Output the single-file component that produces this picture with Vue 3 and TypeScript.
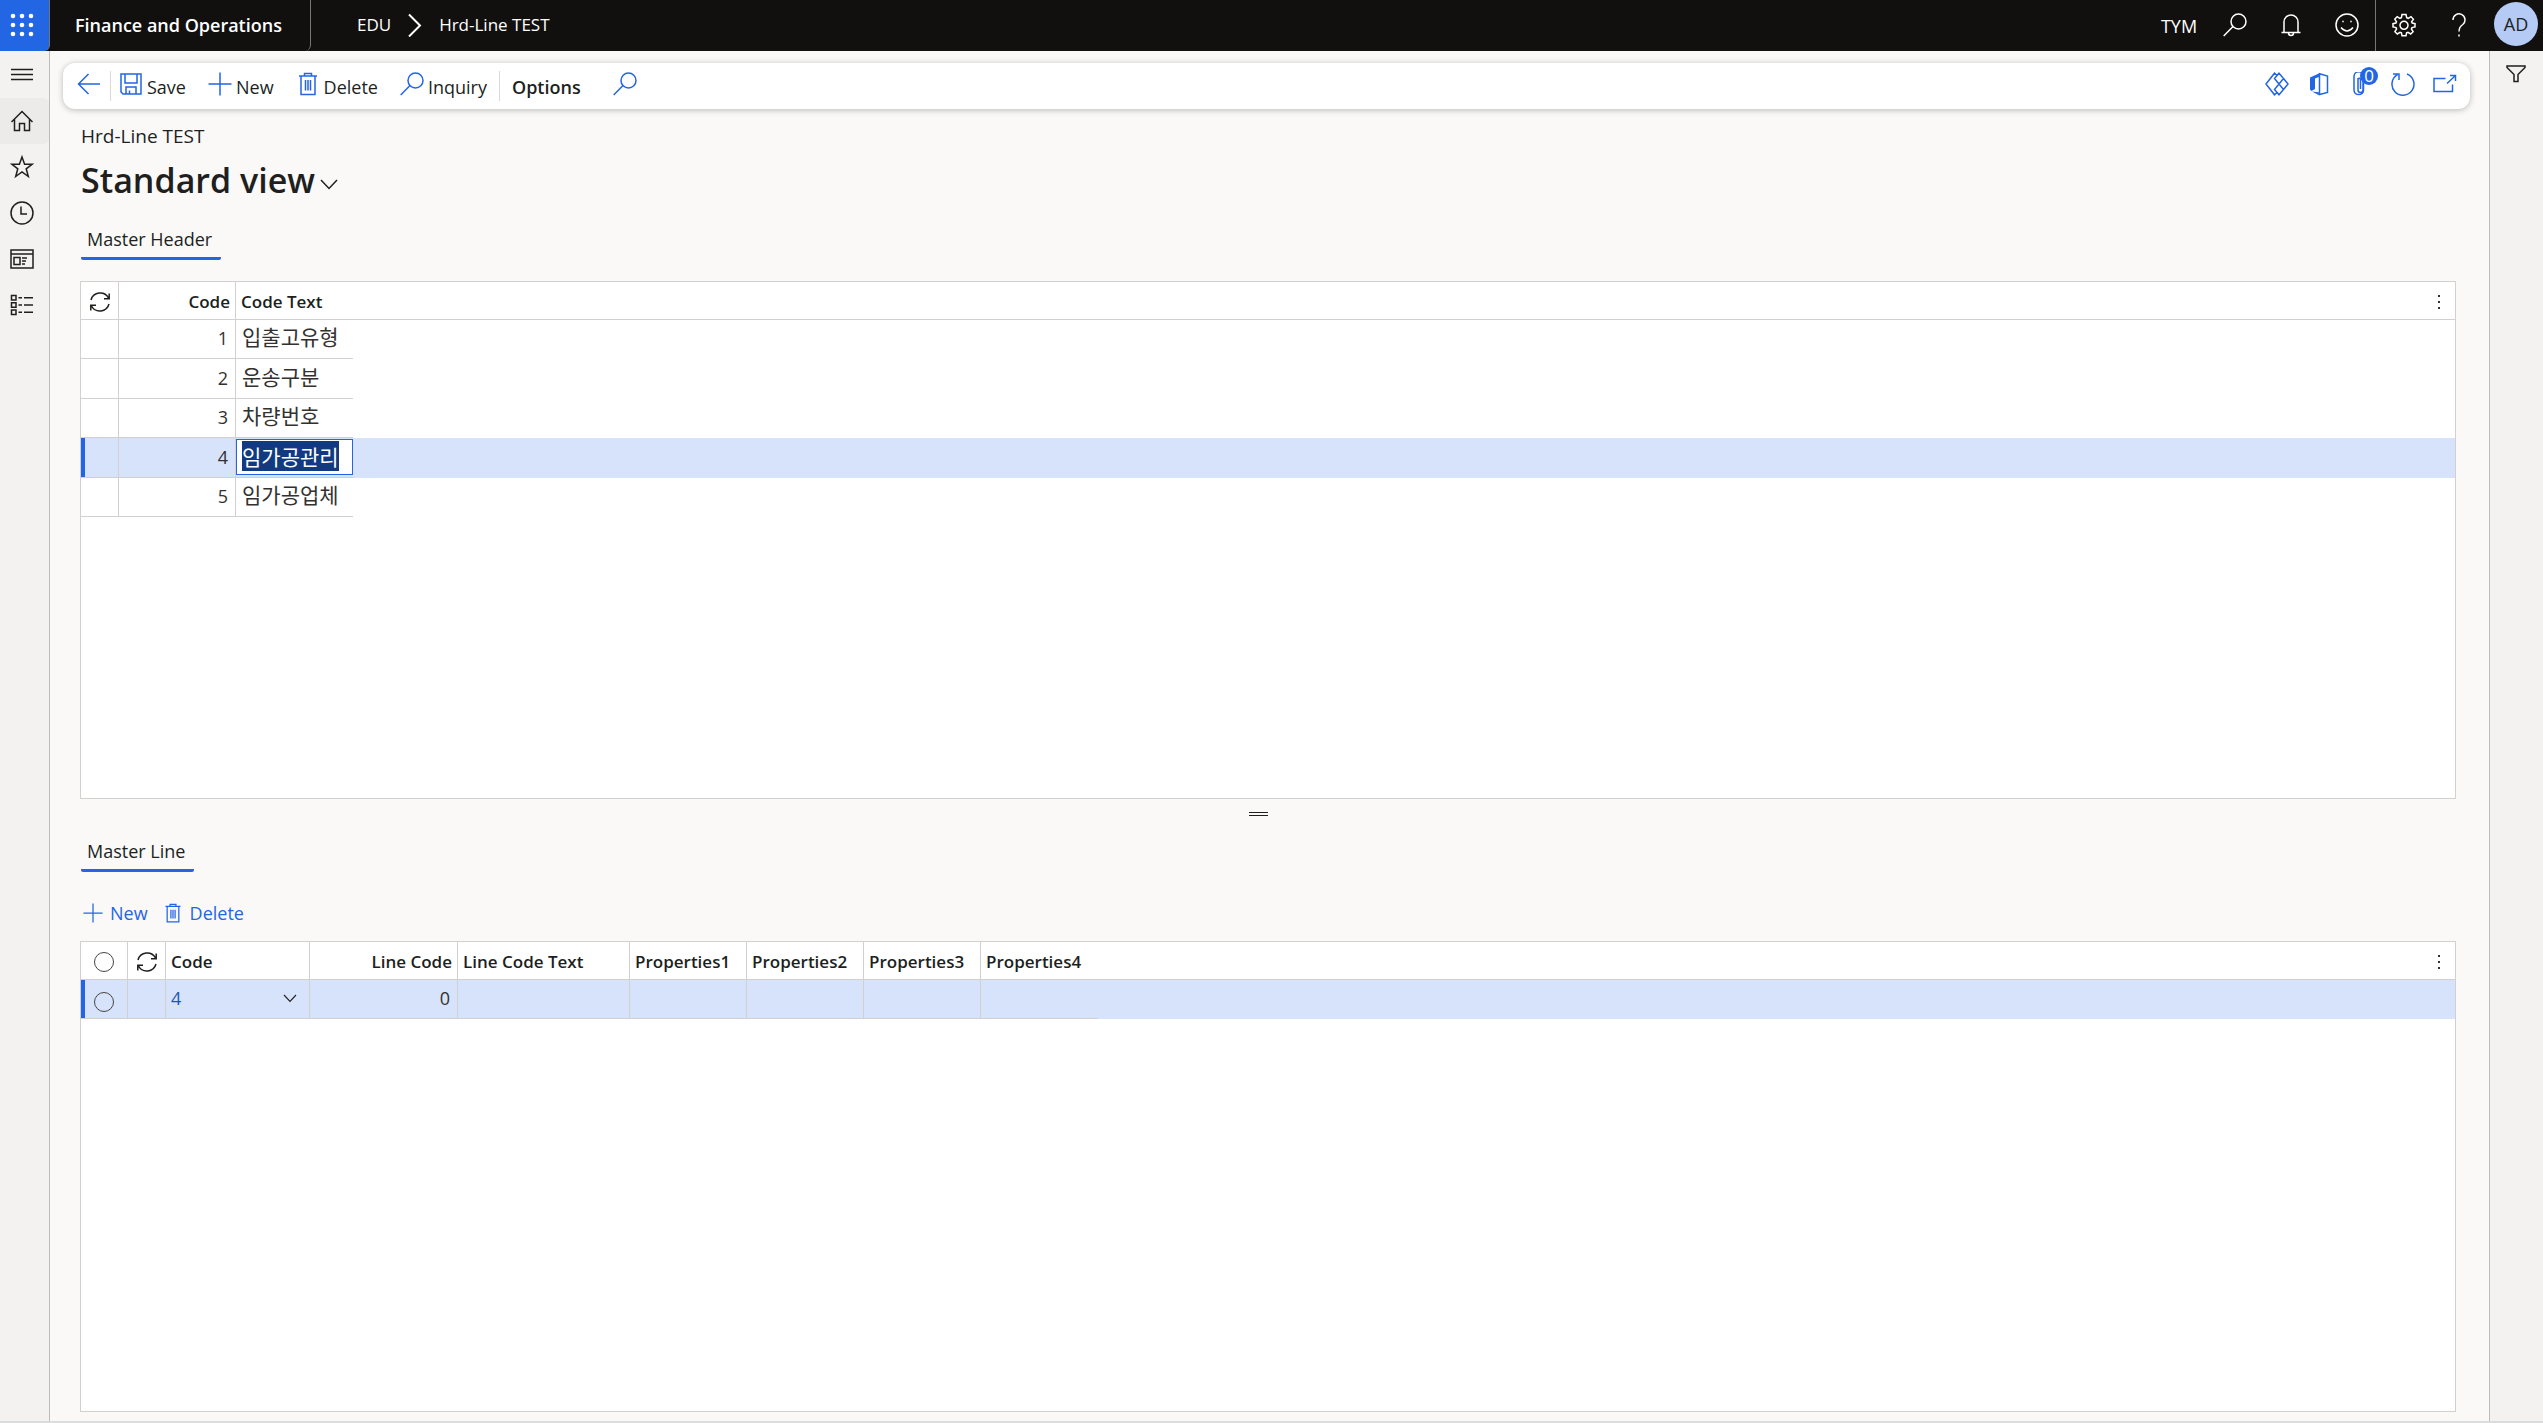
<script setup lang="ts">
import { h, nextTick, onMounted, ref } from 'vue'

interface HeaderRow {
  code: number
  text: string
}

const glyphs: Record<string, string> = {
  menu: 'M1 7.5H23M1 12.5H23M1 17.5H23',
  home: 'M1.5 13L12 2.5L22.500 13M4.500 10.500V21.500H9.500V14.500H14.500V21.500H19.500V10.500',
  star: 'M12 2L14.600 9.300H22L16.200 13.800L18.300 21.500L12 17L5.700 21.500L7.800 13.800L2 9.300H9.400Z',
  clock: 'M12 1A11 11 0 1 1 12 23A11 11 0 1 1 12 1M11 5.500V13H17',
  workspace: 'M1 3H23V21H1ZM1 7H23M4 10.500H10V17.500H4ZM12 11H17M12 14H16M12 17H15',
  list: 'M1.500 2.500H6V7H1.500ZM1.500 9.700H6V14.200H1.500ZM1.500 17H6V21.500H1.500ZM8.500 4.700H12M14 4.700H23M8.500 12H12M14 12H23M8.500 19.200H12M14 19.200H23',
  crumb: 'M6 1.500L17 12.500L6 23.500',
  search: 'M15.500 1A7.500 7.500 0 1 1 15.500 16A7.500 7.500 0 1 1 15.500 1M10 13.500L0.700 23',
  bell: 'M2.500 19.500H21.500M5 19.500V9A7 7 0 0 1 19 9V19.500M9.500 20A2.500 2.500 0 0 0 14.500 20',
  smile: 'M12 1A11 11 0 1 1 12 23A11 11 0 1 1 12 1M6 14.500Q12 21.500 18 14.500M7.300 8.500H8.700M15.300 8.500H16.700M8 7.800V9.200M16 7.800V9.200',
  gear: 'M10 1.500H14L14.700 4.700L16.200 5.300L19 3.600L21.400 6.200L19.600 8.800L20.200 10.100L23 10.700V13.900L20 14.600L19.400 16L21.100 18.700L18.700 21L16 19.300L14.600 19.900L14 22.700H10L9.400 19.900L8 19.300L5.300 21L2.900 18.700L4.600 16L4 14.600L1 13.900V10.700L3.900 10.100L4.500 8.800L2.800 6.200L5.200 3.600L7.900 5.300L9.400 4.700ZM12 8.300A4 4 0 1 1 12 16.300A4 4 0 1 1 12 8.300',
  help: 'M6 7A6 6 0 1 1 15.800 11.500Q12 14.200 12 18.500M12 21.500V23.500',
  back: 'M23 12H1.500M11.500 2L1.500 12L11.500 22',
  save: 'M2 2H22V22H4L2 20ZM6 2V11H18V2M7 22V15H17V22M10.500 22V18.500',
  plus: 'M12 0.500V23.500M0.500 12H23.500',
  trash: 'M3 4H21M8.500 4V1.500H15.500V4M5 4V22.500H19V4M9.500 8V18.500M12 8V18.500M14.500 8V18.500',
  diamonds: 'M12 3.500L9.500 1.200L1 12L9.500 22.800L12 20.500M14 1.200L18.500 6.500L14 12L9.500 6.500ZM14 12L18.500 17.500L14 22.800L9.500 17.500ZM18.500 6.500L23 12L18.500 17.500',
  clip: 'M14 6V18A2.500 2.500 0 0 1 9 18V6M5 17V4.500A4.500 4.500 0 0 1 14.500 4.500V18.500A4.800 4.800 0 0 1 5 18.500V15M9 7A1.500 1.500 0 0 1 11.500 7V17',
  refresh: 'M16 2A11 11 0 1 1 6.500 2.700M2 2H8V8',
  popout: 'M12.500 6.500H1V19.500H19.500V12.500M14 11.500L22.500 3.500M17 3.500H22.500V9',
  filter: 'M3 4H21V5.500L14 12.500V19.500H10V12.500L3 5.500Z',
  sync: 'M3 10A9.500 9.500 0 0 1 20.500 8M21.200 3.500V8.800H16M21 14A9.500 9.500 0 0 1 3.500 16M2.800 20.500V15.200H8',
  chevron: 'M4 8L12 16.500L20 8',
}

function Icon(props: { name: string }) {
  return h(
    'svg',
    {
      viewBox: '0 0 24 24',
      width: 24,
      height: 24,
      fill: 'none',
      stroke: 'currentColor',
      'stroke-width': 1.5,
      'aria-hidden': 'true',
    },
    [h('path', { d: glyphs[props.name] })],
  )
}
Icon.props = ['name']

const navItems = [
  { icon: 'home', label: 'Home' },
  { icon: 'star', label: 'Favorites' },
  { icon: 'clock', label: 'Recent' },
  { icon: 'workspace', label: 'Workspaces' },
  { icon: 'list', label: 'Modules' },
]

const headerRows = ref<HeaderRow[]>([
  { code: 1, text: '입출고유형' },
  { code: 2, text: '운송구분' },
  { code: 3, text: '차량번호' },
  { code: 4, text: '임가공관리' },
  { code: 5, text: '임가공업체' },
])
const selectedCode = ref(4)
const properties = ['Properties1', 'Properties2', 'Properties3', 'Properties4']

onMounted(async () => {
  await nextTick()
  const field = document.querySelector<HTMLInputElement>('#code-text-input')
  field?.focus()
  field?.select()
})
</script>

<template>
  <div class="app">
    <header class="topbar">
      <button class="waffle" aria-label="App launcher">
        <svg width="24" height="24" viewBox="0 0 24 24" fill="currentColor" aria-hidden="true">
          <template v-for="y in 3" :key="y">
            <circle v-for="x in 3" :key="x" :cx="x * 9 - 6" :cy="y * 9 - 6" r="2.300" />
          </template>
        </svg>
      </button>
      <a class="brand" href="#">Finance and Operations</a>
      <nav class="crumbs" aria-label="Breadcrumb">
        <a href="#">EDU</a>
        <Icon name="crumb" class="thick" />
        <a href="#">Hrd-Line TEST</a>
      </nav>
      <div class="top-tools">
        <button class="company">TYM</button>
        <button aria-label="Search"><Icon name="search" /></button>
        <button aria-label="Notifications"><Icon name="bell" /></button>
        <button aria-label="Feedback"><Icon name="smile" /></button>
        <button class="settings" aria-label="Settings"><Icon name="gear" /></button>
        <button aria-label="Help"><Icon name="help" /></button>
        <button class="avatar" aria-label="Account">AD</button>
      </div>
    </header>

    <div class="body">
      <nav class="rail" aria-label="Navigation">
        <button class="menu" aria-label="Expand"><Icon name="menu" /></button>
        <button
          v-for="(item, i) in navItems"
          :key="item.icon"
          :class="{ active: i === 0 }"
          :aria-label="item.label"
        >
          <Icon :name="item.icon" />
        </button>
      </nav>

      <main class="page">
        <div class="actions">
          <button class="back" aria-label="Back"><Icon name="back" /></button>
          <span class="rule"></span>
          <button><Icon name="save" />Save</button>
          <button><Icon name="plus" />New</button>
          <button><Icon name="trash" />Delete</button>
          <button class="last"><Icon name="search" />Inquiry</button>
          <span class="rule"></span>
          <button class="strong">Options</button>
          <button class="find" aria-label="Search actions"><Icon name="search" /></button>
          <div class="action-tools">
            <button aria-label="Power Apps"><Icon name="diamonds" /></button>
            <button aria-label="Open in Office">
              <svg width="24" height="24" viewBox="0 0 24 24" aria-hidden="true">
                <path d="M3 5.500L13 1V4.500L8 6.500V17L4.500 19L3 17.500Z" fill="currentColor" />
                <path d="M5 19.500L13 20.500V23L11 22.800Z" fill="currentColor" />
                <path d="M12.500 1.700L20.500 4V20.500L12.500 22.500Z" fill="none" stroke="currentColor" stroke-width="1.500" />
              </svg>
            </button>
            <button class="attach" aria-label="Attachments">
              <Icon name="clip" /><span class="badge">0</span>
            </button>
            <button aria-label="Refresh"><Icon name="refresh" /></button>
            <button aria-label="Open in new window"><Icon name="popout" /></button>
          </div>
        </div>

        <div class="content">
          <div class="caption">Hrd-Line TEST</div>
          <h1>
            <button class="view">Standard view<Icon name="chevron" /></button>
          </h1>

          <div class="tabs"><button class="tab">Master Header</button></div>
          <section class="grid upper" aria-label="Master Header">
            <table>
              <colgroup>
                <col class="w-mark" />
                <col class="w-prop" />
                <col class="w-prop" />
                <col />
              </colgroup>
              <thead>
                <tr>
                  <th class="mid"><button aria-label="Refresh rows"><Icon name="sync" /></button></th>
                  <th class="num">Code</th>
                  <th class="open">Code Text</th>
                  <th class="fill"><button class="kebab" aria-label="Grid options"><i></i><i></i><i></i></button></th>
                </tr>
              </thead>
              <tbody>
                <tr v-for="row in headerRows" :key="row.code" :class="{ selected: row.code === selectedCode }">
                  <td></td>
                  <td class="num">{{ row.code }}</td>
                  <td v-if="row.code === selectedCode" class="open edit">
                    <input id="code-text-input" v-model="row.text" type="text" aria-label="Code Text" />
                  </td>
                  <td v-else class="open ko">{{ row.text }}</td>
                  <td class="fill"></td>
                </tr>
              </tbody>
            </table>
          </section>

          <div class="splitter"><span></span></div>

          <div class="tabs"><button class="tab">Master Line</button></div>
          <div class="line-actions">
            <button><Icon name="plus" class="small" />New</button>
            <button><Icon name="trash" class="small" />Delete</button>
          </div>
          <section class="grid lower" aria-label="Master Line">
            <table>
              <colgroup>
                <col class="w-radio" />
                <col class="w-mark" />
                <col class="w-code" />
                <col class="w-line" />
                <col class="w-text" />
                <col v-for="p in properties" :key="p" class="w-prop" />
                <col />
              </colgroup>
              <thead>
                <tr>
                  <th class="mid"><input type="radio" name="pick" aria-label="Select all rows" /></th>
                  <th class="mid"><button aria-label="Refresh lines"><Icon name="sync" /></button></th>
                  <th>Code</th>
                  <th class="num">Line Code</th>
                  <th>Line Code Text</th>
                  <th v-for="(p, i) in properties" :key="p" :class="{ open: i === 3 }">{{ p }}</th>
                  <th class="fill"><button class="kebab" aria-label="Grid options"><i></i><i></i><i></i></button></th>
                </tr>
              </thead>
              <tbody>
                <tr class="selected">
                  <td class="mid"><input type="radio" name="pick" aria-label="Select row" /></td>
                  <td></td>
                  <td>
                    <button class="lookup"><span>4</span><Icon name="chevron" class="tiny" /></button>
                  </td>
                  <td class="num">0</td>
                  <td></td>
                  <td v-for="(p, i) in properties" :key="p" :class="{ open: i === 3 }"></td>
                  <td class="fill"></td>
                </tr>
              </tbody>
            </table>
          </section>
        </div>
      </main>

      <aside class="filters">
        <button aria-label="Show filters"><Icon name="filter" /></button>
      </aside>
    </div>
  </div>
</template>

<style>
body {
  margin: 0;
  background: #f3f2f1;
}
</style>

<style scoped>
.app {
  --blue: #2266e3;
  --line: #d2d0ce;
  display: flex;
  flex-direction: column;
  box-sizing: border-box;
  min-height: 100vh;
  border-bottom: 2px solid #dcdcdc;
  background: #faf9f8;
  color: #201f1e;
  font: 18px/24px 'Open Sans', 'Noto Sans CJK KR', sans-serif;
}
button,
input {
  margin: 0;
  padding: 0;
  border: 0;
  background: none;
  color: inherit;
  font: inherit;
}
button,
a {
  display: inline-flex;
  align-items: center;
  justify-content: center;
}
a {
  color: inherit;
  text-decoration: none;
}
svg {
  flex: none;
}
.thick {
  stroke-width: 2;
}
.small {
  width: 20px;
  height: 20px;
}
.tiny {
  width: 18px;
  height: 18px;
}

.topbar {
  display: flex;
  height: 51px;
  background: #11100f;
  color: #fff;
}
.waffle {
  width: 50px;
  padding-right: 5px;
  padding-bottom: 2px;
  border-right: 1px solid #797775;
  border-radius: 0 0 6px 0;
  background: var(--blue);
}
.brand {
  padding: 0 28px 2px 25px;
  border-right: 1px solid #797775;
  border-radius: 0 0 6px 0;
  font-weight: 600;
}
.crumbs {
  display: flex;
  align-items: center;
  gap: 12px;
  padding: 0 0 2px 46px;
  font-size: 17px;
}
.top-tools {
  display: flex;
  margin-left: auto;
}
.top-tools button {
  width: 56px;
  padding-bottom: 2px;
}
.top-tools .company {
  padding-bottom: 0;
}
.top-tools .settings {
  border-left: 1px solid #797775;
}
.top-tools .avatar {
  width: 44px;
  height: 44px;
  margin: 2px 5px 0 7px;
  padding: 0;
  border-radius: 50%;
  background: #b5cbf6;
  color: #201f1e;
}

.body {
  display: flex;
  flex: 1;
}
.rail {
  display: flex;
  flex-direction: column;
  width: 49px;
  border-right: 1px solid #bebbb8;
  background: #f3f2f1;
}
.rail button {
  height: 46px;
  padding-right: 5px;
}
.rail .menu {
  height: 47px;
  padding-bottom: 1px;
}
.rail .active {
  border-radius: 0 6px 6px 0;
  background: #edebe9;
}
.filters {
  width: 53px;
  border-left: 1px solid #bebbb8;
  background: #f3f2f1;
}
.filters button {
  width: 52px;
  height: 46px;
}

.page {
  display: flex;
  flex: 1;
  flex-direction: column;
  min-width: 0;
}
.actions {
  display: flex;
  align-items: center;
  height: 46px;
  margin: 12px 19px 0 13px;
  padding: 0 13px 0 14px;
  border-radius: 12px;
  background: #fff;
  box-shadow: 0 1px 6px rgba(0, 0, 0, 0.26);
}
.actions button {
  gap: 4px;
  margin-right: 22px;
  padding-top: 2px;
}
.actions svg {
  margin-bottom: 6px;
  color: var(--blue);
}
.actions .back {
  margin-right: 9px;
}
.actions .last {
  margin-right: 12px;
}
.rule {
  width: 1px;
  height: 30px;
  margin-right: 8px;
  background: #dcdad8;
}
.actions .strong {
  margin-right: 32px;
  padding-left: 4px;
  font-weight: 600;
}
.action-tools {
  display: flex;
  gap: 18px;
  margin-left: auto;
}
.actions .action-tools button {
  margin: 0;
}
.attach {
  position: relative;
}
.badge {
  position: absolute;
  top: -3px;
  right: -5px;
  width: 18px;
  height: 18px;
  border-radius: 50%;
  background: var(--blue);
  color: #fff;
  font-size: 17px;
  line-height: 18px;
}

.content {
  display: flex;
  flex: 1;
  flex-direction: column;
  padding: 15px 33px 9px 30px;
}
.caption {
  padding-left: 1px;
  font-size: 19px;
}
h1 {
  margin: 10px 0 0;
  font-size: 34px;
  font-weight: 600;
  line-height: 44px;
}
.view {
  gap: 2px;
  padding-left: 1px;
}
.view svg {
  margin-top: 8px;
}
.tabs {
  display: flex;
  margin-top: 24px;
}
.tab {
  height: 34px;
  margin-left: 1px;
  padding: 0 9px 6px 6px;
  border-bottom: 3px solid var(--blue);
  border-radius: 2px;
}
.grid {
  border: 1px solid var(--line);
  background: #fff;
}
.upper {
  flex: 517 1 0;
  margin-top: 21px;
}
.lower {
  flex: 469 1 0;
}

table {
  width: 100%;
  border-spacing: 0;
  table-layout: fixed;
}
.w-mark {
  width: 38px;
}
.w-radio {
  width: 47px;
}
.w-prop {
  width: 117px;
}
.w-code {
  width: 144px;
}
.w-line {
  width: 148px;
}
.w-text {
  width: 172px;
}
th,
td {
  box-sizing: border-box;
  height: 39px;
  padding: 0 5px 2px;
  border-right: 1px solid var(--line);
  border-bottom: 1px solid var(--line);
  text-align: left;
  line-height: 24px;
}
th {
  height: 38px;
  padding-top: 2px;
  padding-bottom: 0;
  font-size: 17px;
  font-weight: 600;
}
.upper tbody tr:nth-child(even) td {
  height: 40px;
}
.num {
  text-align: right;
}
.mid {
  padding: 0;
  text-align: center;
  vertical-align: middle;
}
.mid button,
.mid input {
  vertical-align: middle;
}
.mid button {
  padding-top: 2px;
}
.open {
  border-right: 0;
}
.fill {
  padding: 0 10px 0 0;
  border-right: 0;
  text-align: right;
}
td.fill {
  border-bottom: 0;
}
td.ko {
  padding: 0 0 6px 6px;
}
.ko,
.edit input {
  font-family: 'Noto Sans CJK KR', sans-serif;
  font-size: 21px;
}
td.ko,
td.num {
  color: #323130;
}
td.num {
  padding-right: 7px;
}
.selected td {
  background: #d7e3fb;
}
.selected td:first-child {
  box-shadow: inset 4px 0 var(--blue);
}
.selected td.edit {
  padding: 0 0 2px;
}
.edit input {
  display: block;
  box-sizing: border-box;
  width: 100%;
  height: 36px;
  padding: 0 5px 2px;
  border: 1px solid var(--blue);
  outline: 0;
  background: #fff;
}
.edit input::selection {
  background: #123a80;
  color: #fff;
}
input[type='radio'] {
  width: 20px;
  height: 20px;
  border: 1px solid #484644;
  border-radius: 50%;
  appearance: none;
}
.kebab {
  flex-direction: column;
  gap: 4px;
  width: 12px;
  vertical-align: middle;
}
.kebab i {
  width: 2px;
  height: 2px;
  background: #323130;
}
.lookup {
  justify-content: space-between;
  width: 100%;
  padding-right: 5px;
}
.lookup span {
  color: #1f55b8;
}

.splitter {
  display: flex;
  justify-content: center;
  padding: 13px 19px 0 0;
}
.splitter span {
  width: 19px;
  height: 2px;
  border-top: 1px solid #201f1e;
  border-bottom: 1px solid #201f1e;
}
.splitter + .tabs {
  margin-top: 22px;
}
.line-actions {
  display: flex;
  gap: 15px;
  padding: 29px 3px 16px;
  color: var(--blue);
}
.line-actions button {
  gap: 7px;
}
</style>
